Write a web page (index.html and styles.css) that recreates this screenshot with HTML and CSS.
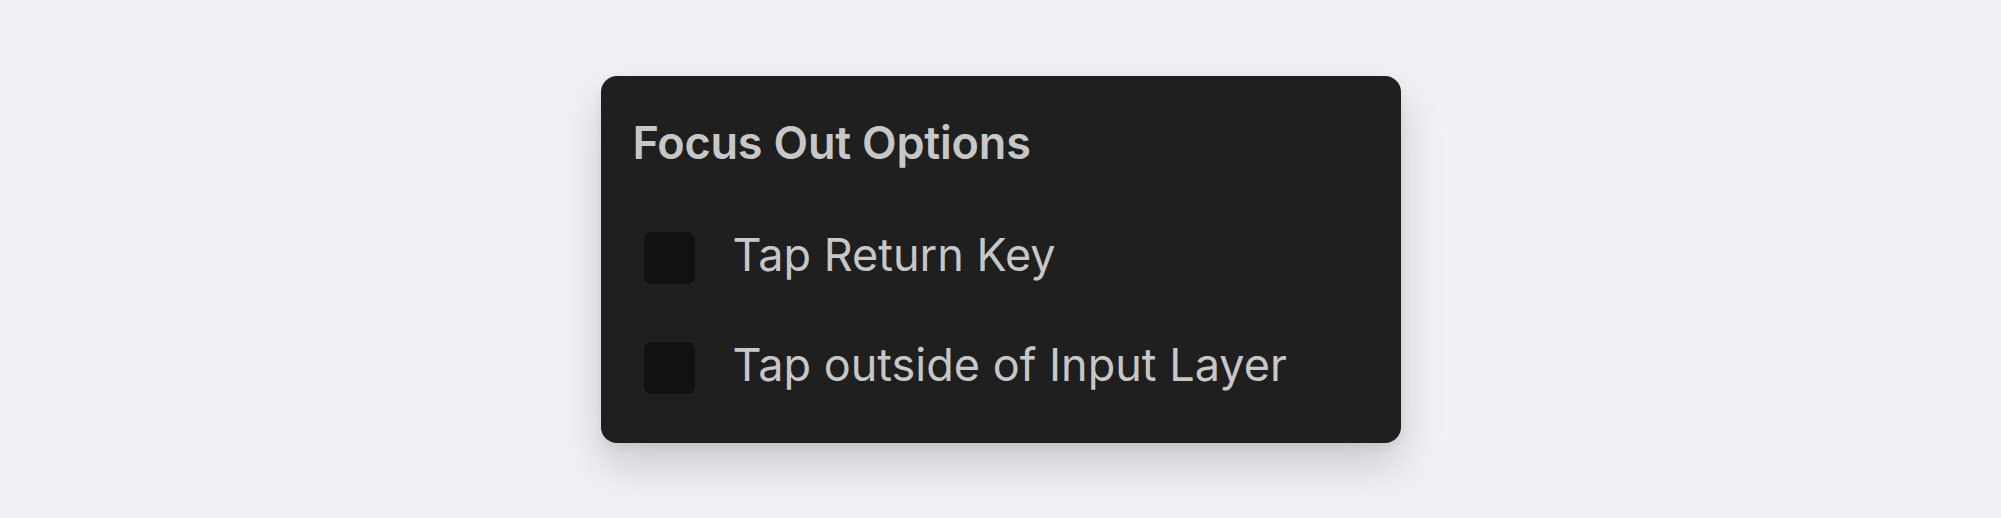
FILE: index.html
```html
<!DOCTYPE html>
<html>
<head>
<meta charset="utf-8">
<link rel="stylesheet" href="styles.css">
</head>
<body>
<div class="stage">
  <div class="card">
    <div class="title">Focus Out Options</div>
    <div class="options">
      <label class="option">
        <span class="box"></span>
        <span class="label">Tap Return Key</span>
      </label>
      <label class="option">
        <span class="box"></span>
        <span class="label">Tap outside of Input Layer</span>
      </label>
    </div>
  </div>
</div>
</body>
</html>
```
FILE: styles.css
```css
html, body {
  margin: 0;
  padding: 0;
}
body {
  background: #f0f1f5;
  font-family: Inter, "Noto Sans", sans-serif;
}
.stage {
  width: 2001px;
  height: 518px;
  display: flex;
  align-items: center;
  justify-content: center;
}
.card {
  width: 800px;
  height: 367px;
  box-sizing: border-box;
  background: #1f1f1f;
  border-radius: 16px;
  padding: 44px 32px 0 32px;
  box-shadow: 0 22px 44px rgba(0, 0, 0, 0.16), 0 4px 10px rgba(0, 0, 0, 0.06);
}
.title {
  font-size: 45px;
  line-height: 45px;
  font-weight: 600;
  color: #c7c7c7;
  letter-spacing: -0.2px;
}
.options {
  display: flex;
  flex-direction: column;
  gap: 58px;
  margin-top: 67px;
  padding-left: 11px;
}
.option {
  display: flex;
  align-items: center;
  gap: 38px;
  height: 52px;
}
.box {
  width: 51px;
  height: 52px;
  border-radius: 8px;
  background: #111111;
  flex: none;
}
.label {
  font-size: 45px;
  line-height: 45px;
  margin-bottom: 7px;
  color: #c7c7c7;
  font-weight: 400;
}
```
